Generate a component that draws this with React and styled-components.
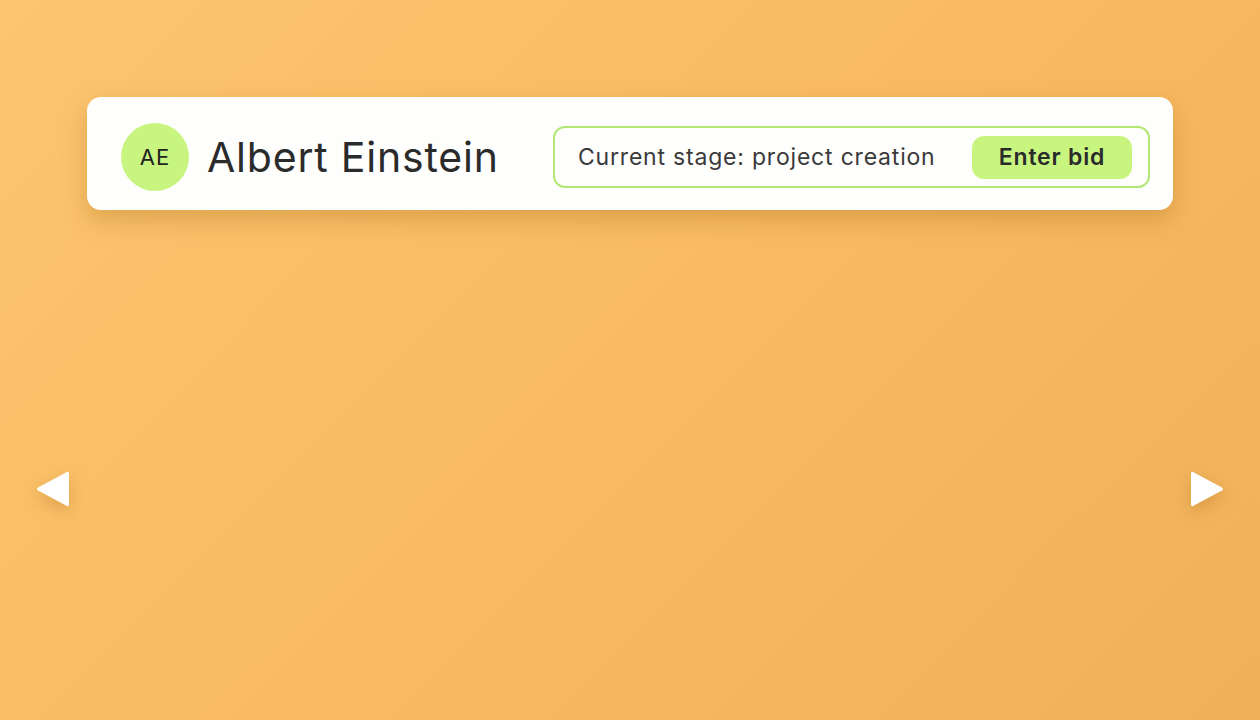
import React from "react";
import styled, { createGlobalStyle } from "styled-components";

const Global = createGlobalStyle`
  html, body { margin: 0; padding: 0; }
  body {
    font-family: Inter, "Noto Sans", sans-serif;
    background: linear-gradient(135deg, #fcc56f 0%, #f8bb62 50%, #efb058 100%);
    min-height: 100vh;
  }
`;

const Page = styled.div`
  width: 1260px;
  height: 720px;
  box-sizing: border-box;
  padding-top: 97px;
  display: flex;
  flex-direction: column;
`;

const Card = styled.div`
  margin: 0 87px;
  height: 113px;
  box-sizing: border-box;
  background: #fefefd;
  border-radius: 14px;
  box-shadow: 0 10px 24px rgba(170, 110, 30, 0.35);
  display: flex;
  align-items: center;
  padding: 7px 23px 0 34px;
`;

const Avatar = styled.div`
  width: 68px;
  height: 68px;
  border-radius: 50%;
  background: #c8f57f;
  display: flex;
  align-items: center;
  justify-content: center;
  font-size: 22px;
  color: #222;
  letter-spacing: 1px;
  flex-shrink: 0;
`;

const Name = styled.div`
  margin-left: 18px;
  font-size: 41px;
  font-weight: 400;
  color: #2b2b2b;
  letter-spacing: 0.8px;
  flex: 1;
`;

const Stage = styled.div`
  width: 597px;
  height: 62px;
  box-sizing: border-box;
  border: 2px solid #b2e775;
  border-radius: 12px;
  display: flex;
  align-items: center;
  justify-content: space-between;
  padding: 0 16px 0 23px;
`;

const StageText = styled.span`
  font-size: 23px;
  color: #3a3a3a;
  letter-spacing: 0.8px;
`;

const Button = styled.button`
  height: 43px;
  width: 160px;
  border: none;
  border-radius: 12px;
  background: #c8f57f;
  font-family: inherit;
  font-size: 23px;
  font-weight: 600;
  letter-spacing: 0.8px;
  color: #2b2b2b;
  cursor: pointer;
`;

const Nav = styled.div`
  margin-top: 260px;
  padding: 0 36px;
  display: flex;
  justify-content: space-between;
`;

const Arrow = styled.button`
  width: 34px;
  height: 38px;
  padding: 0;
  border: none;
  background: none;
  cursor: pointer;
  filter: drop-shadow(0 6px 8px rgba(170, 110, 30, 0.35));
  svg { display: block; }
`;

const Tri = ({ dir }) => (
  <svg width="34" height="38" viewBox="0 0 34 38">
    {dir === "left" ? (
      <path d="M31 2 Q33 1 33 4 V34 Q33 37 31 36 L2 20.5 Q0 19 2 17.5 Z" fill="#fff" />
    ) : (
      <path d="M3 2 Q1 1 1 4 V34 Q1 37 3 36 L32 20.5 Q34 19 32 17.5 Z" fill="#fff" />
    )}
  </svg>
);

export default function App() {
  return (
    <>
      <Global />
      <Page>
        <Card>
          <Avatar>AE</Avatar>
          <Name>Albert Einstein</Name>
          <Stage>
            <StageText>Current stage: project creation</StageText>
            <Button>Enter bid</Button>
          </Stage>
        </Card>
        <Nav>
          <Arrow aria-label="Previous"><Tri dir="left" /></Arrow>
          <Arrow aria-label="Next"><Tri dir="right" /></Arrow>
        </Nav>
      </Page>
    </>
  );
}
